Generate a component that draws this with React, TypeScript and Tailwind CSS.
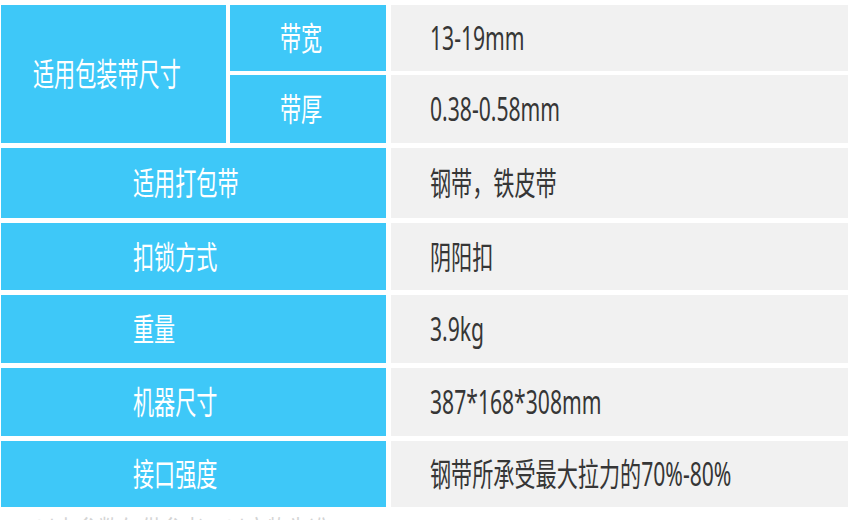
import React from "react";

const FONT = { fontFamily: '"Noto Sans", "Noto Sans CJK SC", sans-serif' };

function T({ children, dark }: { children: React.ReactNode; dark?: boolean }) {
  return (
    <span
      className={
        "inline-block whitespace-nowrap text-[32px] leading-none origin-left scale-x-[0.66] " +
        (dark ? "text-[#363636]" : "text-white")
      }
      style={FONT}
    >
      {children}
    </span>
  );
}

function Row({ label, value, h }: { label: string; value: string; h: string }) {
  return (
    <div className={"flex gap-[5px] " + h}>
      <div className="w-[385px] shrink-0 bg-[#3ec8f8] flex items-center pl-[132px] min-w-0 overflow-visible">
        <T>{label}</T>
      </div>
      <div className="flex-1 min-w-0 bg-[#f1f1f1] flex items-center pl-[39px]">
        <T dark>{value}</T>
      </div>
    </div>
  );
}

export default function App() {
  return (
    <div className="w-[850px] h-[520px] overflow-hidden bg-white pt-[5px] pl-[1px]">
      <div className="w-[847px] flex flex-col gap-[5px]">
        <div className="flex gap-[4px] h-[138px]">
          <div className="w-[225px] shrink-0 bg-[#3ec8f8] flex items-center pl-[32px] min-w-0">
            <T>适用包装带尺寸</T>
          </div>
          <div className="flex-1 min-w-0 flex flex-col gap-[4px]">
            <div className="flex gap-[5px] h-[66px]">
              <div className="w-[156px] shrink-0 bg-[#3ec8f8] flex items-center pl-[50px] min-w-0">
                <T>带宽</T>
              </div>
              <div className="flex-1 min-w-0 bg-[#f1f1f1] flex items-center pl-[39px]">
                <T dark>13-19mm</T>
              </div>
            </div>
            <div className="flex gap-[5px] h-[68px]">
              <div className="w-[156px] shrink-0 bg-[#3ec8f8] flex items-center pl-[50px] min-w-0">
                <T>带厚</T>
              </div>
              <div className="flex-1 min-w-0 bg-[#f1f1f1] flex items-center pl-[39px]">
                <T dark>0.38-0.58mm</T>
              </div>
            </div>
          </div>
        </div>
        <Row label="适用打包带" value="钢带，铁皮带" h="h-[70px]" />
        <Row label="扣锁方式" value="阴阳扣" h="h-[67px]" />
        <Row label="重量" value="3.9kg" h="h-[68px]" />
        <Row label="机器尺寸" value="387*168*308mm" h="h-[68px]" />
        <Row label="接口强度" value="钢带所承受最大拉力的70%-80%" h="h-[66px]" />
        <div className="pl-[34px] pt-[4px] h-[20px]">
          <span
            className="inline-block whitespace-nowrap text-[32px] leading-none origin-left scale-x-[0.66] text-[#d4d4d4]"
            style={FONT}
          >
            以上参数仅供参考，以实物为准
          </span>
        </div>
      </div>
    </div>
  );
}
